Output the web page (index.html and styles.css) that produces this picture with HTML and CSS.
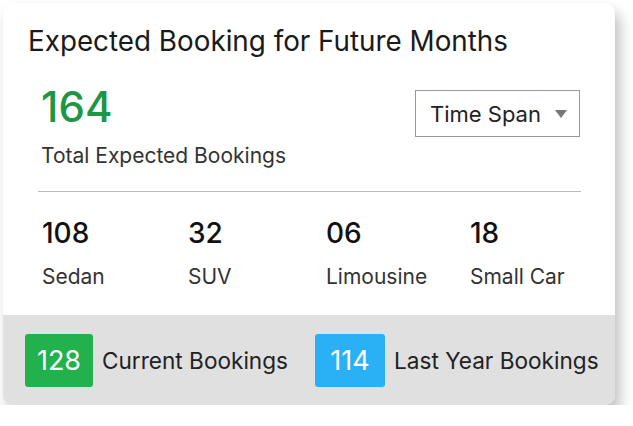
FILE: index.html
```html
<!DOCTYPE html>
<html lang="en">
<head>
  <meta charset="UTF-8">
  <meta name="viewport" content="width=device-width, initial-scale=1.0">
  <title>Expected Booking</title>
  <link rel="stylesheet" href="styles.css">
</head>

<body>
  <div class="card">
    <h2 class="card-title">Expected Booking for Future Months</h2>

    <div class="summary">
      <div class="total">
        <div class="total-value">164</div>
        <div class="total-label">Total Expected Bookings</div>
      </div>
      <div class="select">
        <span>Time Span</span>
        <span class="select-arrow"></span>
      </div>
    </div>

    <div class="divider"></div>

    <div class="stats">
      <div class="stat">
        <div class="stat-value">108</div>
        <div class="stat-label">Sedan</div>
      </div>
      <div class="stat">
        <div class="stat-value">32</div>
        <div class="stat-label">SUV</div>
      </div>
      <div class="stat">
        <div class="stat-value">06</div>
        <div class="stat-label">Limousine</div>
      </div>
      <div class="stat">
        <div class="stat-value">18</div>
        <div class="stat-label">Small Car</div>
      </div>
    </div>

    <div class="footer">
      <div class="badge-item">
        <span class="badge badge-green">128</span>
        <span class="badge-text">Current Bookings</span>
      </div>
      <div class="badge-item">
        <span class="badge badge-blue">114</span>
        <span class="badge-text">Last Year Bookings</span>
      </div>
    </div>
  </div>
</body>
</html>
```

FILE: styles.css
```css
body {
  margin: 0;
  padding: 3px 0 0 3px;
  font-family: Inter, "Open Sans", sans-serif;
  background-color: #fff;
  color: #1f1f1f;
}

.card {
  width: 612px;
  height: 402px;
  background-color: #fff;
  border-radius: 10px;
  overflow: hidden;
  display: flex;
  flex-direction: column;
  box-shadow: 5px 9px 14px rgba(0,0,0,0.25);
}

.card-title {
  margin: 0;
  padding: 21px 0 0 25px;
  font-size: 27.8px;
  font-weight: 400;
  line-height: 34px;
  color: #1a1a1a;
}

.summary {
  display: flex;
  justify-content: space-between;
  align-items: flex-start;
  padding: 0 35px 0 38px;
  margin-top: 29px;
}

.total-value {
  font-size: 42px;
  line-height: 40px;
  font-weight: 500;
  color: #1e9645;
}

.total-label {
  margin-top: 17px;
  font-size: 21px;
  line-height: 24px;
  color: #333;
}

.select {
  width: 165px;
  height: 47px;
  border: 1px solid #999;
  box-sizing: border-box;
  display: flex;
  align-items: center;
  justify-content: space-between;
  padding: 0 12px 0 14px;
  margin-top: 3px;
  font-size: 22px;
  color: #222;
}

.select-arrow {
  width: 0;
  height: 0;
  border-left: 6px solid transparent;
  border-right: 6px solid transparent;
  border-top: 8px solid #777;
}

.divider {
  margin: 23px 34px 0 35px;
  border-top: 1px solid #bbb;
}

.stats {
  display: grid;
  grid-template-columns: 146px 138px 144px 1fr;
  padding: 24px 0 0 39px;
}

.stat-value {
  font-size: 28px;
  line-height: 34px;
  font-weight: 500;
  color: #111;
}

.stat-label {
  margin-top: 14px;
  font-size: 21px;
  line-height: 26px;
  color: #333;
}

.footer {
  margin-top: auto;
  height: 90px;
  background-color: #e0e0e0;
  display: flex;
  align-items: center;
  gap: 27px;
  padding-left: 22px;
}

.badge-item {
  display: flex;
  align-items: center;
  gap: 9px;
}

.badge {
  display: inline-block;
  width: 68px;
  height: 53px;
  line-height: 53px;
  text-align: center;
  border-radius: 3px;
  color: #fff;
  font-size: 27px;
}

.badge-green {
  background-color: #22b14c;
}

.badge-blue {
  width: 70px;
  background-color: #29b0f5;
}

.badge-text {
  font-size: 22.6px;
  color: #222;
}
```
